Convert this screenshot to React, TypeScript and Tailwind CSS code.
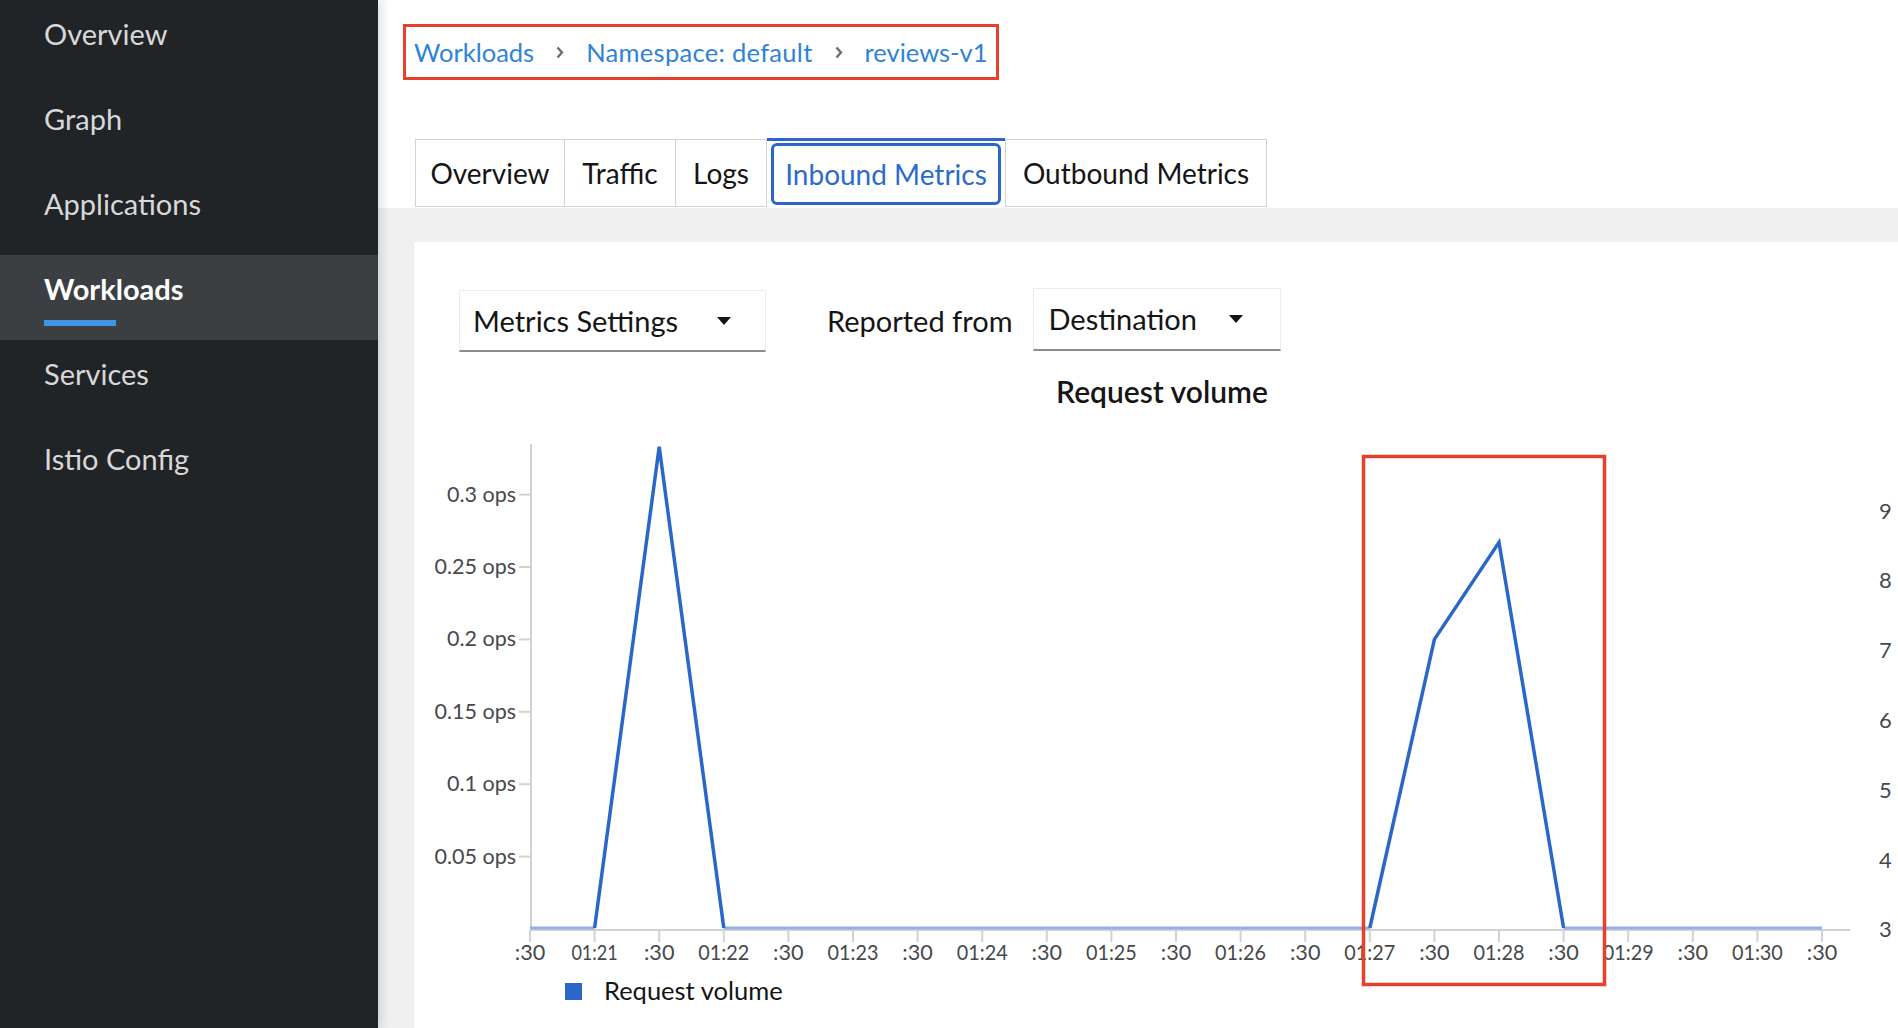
import React from 'react'

const navItems = ['Overview', 'Graph', 'Applications', 'Workloads', 'Services', 'Istio Config']

const tickLabels = [
  ':30', '01:21', ':30', '01:22', ':30', '01:23', ':30', '01:24', ':30', '01:25', ':30',
  '01:26', ':30', '01:27', ':30', '01:28', ':30', '01:29', ':30', '01:30', ':30',
]
const values = [0, 0, 0.333, 0, 0, 0, 0, 0, 0, 0, 0, 0, 0, 0, 0.2, 0.267, 0, 0, 0, 0, 0]
const yTicks = [0.3, 0.25, 0.2, 0.15, 0.1, 0.05]
const rightTicks = [9, 8, 7, 6, 5, 4, 3]

const X0 = 530
const STEP = 64.6
const Y0 = 930
const YSCALE = 1448
const xAt = (i: number) => X0 + STEP * i
const yAt = (v: number) => Y0 - v * YSCALE

// the chart font has narrow "1"s, so squeeze those labels a bit
function labelWidth(s: string) {
  let w = 0
  for (const c of s) w += c === '1' ? 0.37 : c === ':' ? 0.26 : 0.58
  return w * 21.5
}

function Caret() {
  return (
    <svg width="14" height="8" viewBox="0 0 14 8">
      <polygon points="0,0 14,0 7,8" fill="#151515" />
    </svg>
  )
}

function Chevron() {
  return (
    <svg width="8" height="13" viewBox="0 0 8 13" className="mx-[22px] shrink-0">
      <path d="M1.5 1.5 L6 6.5 L1.5 11.5" stroke="#6a6e73" strokeWidth="2.4" fill="none" />
    </svg>
  )
}

function RequestChart() {
  // split the series into sloped runs (dark) and flat zero runs (light)
  const runs: number[][] = []
  const flats: [number, number][] = []
  let cur: number[] = []
  for (let i = 0; i < values.length - 1; i++) {
    const flat = values[i] === 0 && values[i + 1] === 0
    if (flat) {
      flats.push([i, i + 1])
      if (cur.length) { runs.push(cur); cur = [] }
    } else {
      if (!cur.length) cur.push(i)
      cur.push(i + 1)
    }
  }
  if (cur.length) runs.push(cur)

  return (
    <svg width={1484} height={608} viewBox="414 420 1484 608" className="block mt-[10px]">
      <line x1={531} y1={445} x2={531} y2={931} stroke="#d2d2d2" strokeWidth={2} />
      <line x1={530} y1={931} x2={1850} y2={931} stroke="#d2d2d2" strokeWidth={2} />

      {yTicks.map(v => (
        <g key={v}>
          <line x1={519} y1={yAt(v)} x2={531} y2={yAt(v)} stroke="#d2d2d2" strokeWidth={2} />
          <text x={516} y={yAt(v) - 1} textAnchor="end" dominantBaseline="central" fontSize={21.5} fill="#46494c">
            {v} ops
          </text>
        </g>
      ))}

      {tickLabels.map((l, i) => (
        <g key={i}>
          <line x1={xAt(i)} y1={931} x2={xAt(i)} y2={943} stroke="#d2d2d2" strokeWidth={2} />
          <text
            x={xAt(i)}
            y={953}
            textAnchor="middle"
            dominantBaseline="central"
            fontSize={21.5}
            fill="#46494c"
            textLength={labelWidth(l)}
            lengthAdjust="spacingAndGlyphs"
          >
            {l}
          </text>
        </g>
      ))}

      {rightTicks.map((n, i) => (
        <text key={n} x={1879} y={511 + i * 69.8} dominantBaseline="central" fontSize={22} fill="#46494c">
          {n}
        </text>
      ))}

      {flats.map(([a, b]) => (
        <line key={a} x1={xAt(a)} y1={929} x2={xAt(b)} y2={929} stroke="#8fb1e6" strokeWidth={3} />
      ))}
      {runs.map((r, k) => (
        <polyline
          key={k}
          points={r.map(i => `${xAt(i)},${values[i] === 0 ? 929 : yAt(values[i])}`).join(' ')}
          fill="none"
          stroke="#2b66c9"
          strokeWidth={3.5}
          strokeLinejoin="miter"
        />
      ))}

      <rect x={565} y={984} width={17} height={17} fill="#2b66c9" />
      <text x={604} y={991} dominantBaseline="central" fontSize={25.5} fill="#151515">
        Request volume
      </text>

      <rect x={1363.5} y={457.5} width={241} height={528} fill="none" stroke="#e5412d" strokeWidth={3.5} />
    </svg>
  )
}

export default function App() {
  return (
    <div className="flex h-[1028px] w-[1898px] overflow-hidden font-['Lato','Open_Sans',sans-serif] text-[#151515]">
      <nav className="w-[378px] shrink-0 bg-[#212427] relative z-10 shadow-[3px_0_10px_rgba(0,0,0,0.15)]">
        {navItems.map(item => {
          const active = item === 'Workloads'
          return (
            <div
              key={item}
              className={active ? 'h-[85px] pl-[44px] pt-[16px] bg-[#3c3f42]' : 'h-[85px] pl-[44px] pt-[16px]'}
            >
              <div className={active ? 'text-[29px] leading-[35px] font-bold text-white' : 'text-[29px] leading-[35px] text-[#d8d8d8]'}>
                {item}
              </div>
              {active && <div className="mt-[14px] w-[72px] h-[6px] bg-[#4394e5]" />}
            </div>
          )
        })}
      </nav>

      <main className="flex-1 flex flex-col min-w-0 bg-[#f0f0f0]">
        <div className="bg-white pb-px">
          <div className="ml-[25px] mt-[24px] w-[596px] h-[56px] border-[3px] border-[#e5412d] flex items-center pl-[8px] text-[25.5px] text-[#2f83d6]">
            <span>Workloads</span>
            <Chevron />
            <span className="tracking-[0.3px]">Namespace: default</span>
            <Chevron />
            <span>reviews-v1</span>
          </div>

          <div className="flex items-end ml-[37px] mt-[58px] text-[28px]">
            <div className="w-[149px] h-[68px] border-l border-y border-[#d2d2d2] flex items-center justify-center">Overview</div>
            <div className="w-[111px] h-[68px] border-l border-y border-[#d2d2d2] flex items-center justify-center">Traffic</div>
            <div className="w-[92px] h-[68px] border border-[#d2d2d2] flex items-center justify-center">Logs</div>
            <div className="w-[238px] h-[69px] border-t-[3px] border-[#2b66c9] px-[4px] pt-[2px] pb-[2px]">
              <div className="h-full border-[3px] border-[#2b66c9] rounded-[6px] flex items-center justify-center text-[#2b6bcb]">
                Inbound Metrics
              </div>
            </div>
            <div className="w-[262px] h-[68px] border border-[#d2d2d2] flex items-center justify-center">Outbound Metrics</div>
          </div>
        </div>

        <div className="pt-[34px] pl-[36px] flex-1 flex flex-col min-h-0">
          <div className="bg-white flex-1 shadow-[0_1px_2px_rgba(0,0,0,0.08)]">
            <div className="flex items-start ml-[45px] mt-[46px] text-[29px]">
              <div className="mt-[2px] w-[307px] h-[62px] border border-[#ececec] border-b-2 border-b-[#8a8d90] flex items-center justify-between pl-[13px] pr-[34px]">
                <span>Metrics Settings</span>
                <Caret />
              </div>
              <div className="ml-[61px] h-[63px] pt-[3px] flex items-center">Reported from</div>
              <div className="ml-[20px] w-[248px] h-[63px] border border-[#ececec] border-b-2 border-b-[#8a8d90] flex items-center justify-between pl-[15px] pr-[37px]">
                <span>Destination</span>
                <Caret />
              </div>
            </div>

            <div className="mt-[21px] pl-[12px] text-center text-[30px] leading-[36px] font-semibold">Request volume</div>

            <RequestChart />
          </div>
        </div>
      </main>
    </div>
  )
}
